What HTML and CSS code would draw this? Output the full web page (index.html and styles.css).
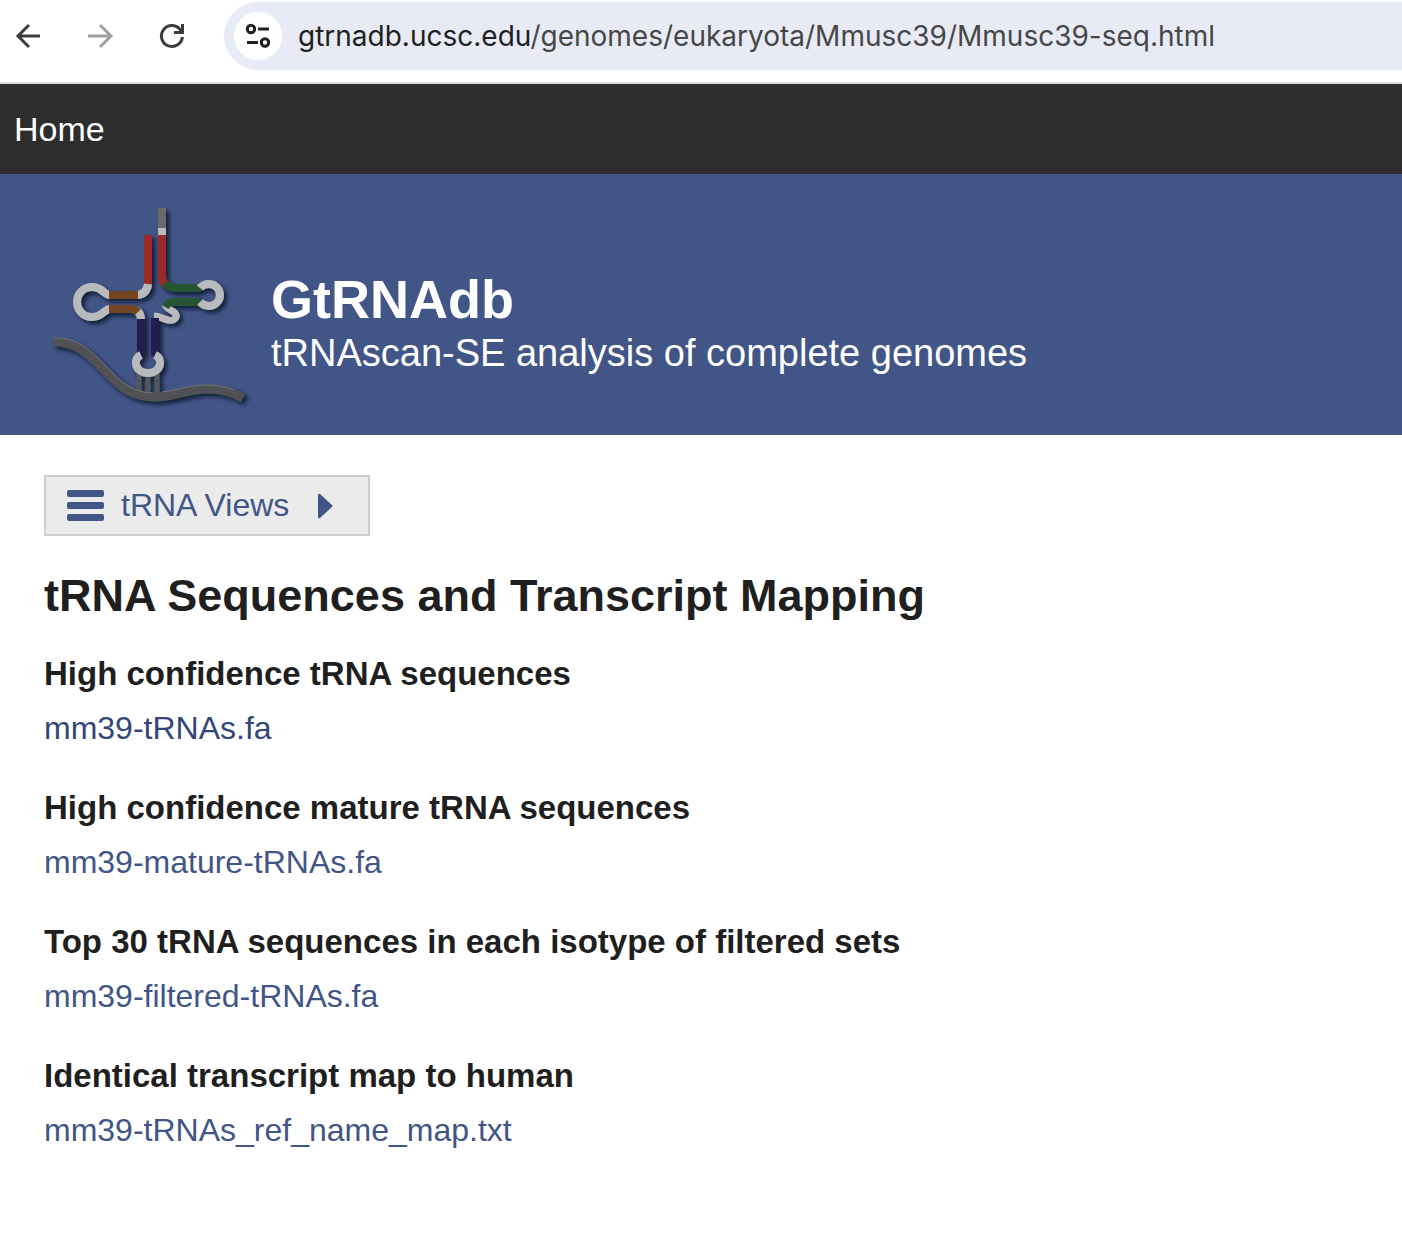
FILE: index.html
```html
<!DOCTYPE html>
<html lang="en">
<head>
<meta charset="utf-8">
<title>GtRNAdb - tRNA Sequences and Transcript Mapping</title>
<meta name="viewport" content="width=device-width, initial-scale=1">
<link rel="stylesheet" href="styles.css">
</head>
<body>
<div class="toolbar">
  <button class="tool" type="button" aria-label="Back">
    <svg width="32" height="32" viewBox="0 0 32 32" fill="none" stroke="#3c3c3c" stroke-width="3"><path d="M28 16H7M17 5L6 16L17 27"/></svg>
  </button>
  <button class="tool" type="button" aria-label="Forward" disabled>
    <svg width="32" height="32" viewBox="0 0 32 32" fill="none" stroke="#a0a0a0" stroke-width="3"><path d="M4 16H26M16 5L27 16L16 27"/></svg>
  </button>
  <button class="tool" type="button" aria-label="Reload">
    <svg width="32" height="32" viewBox="0 0 32 32" fill="none" stroke="#3c3c3c" stroke-width="3"><path d="M26.400 17A10.500 10.500 0 1 1 23.500 8.700L26 12M26.500 4V12.500H18"/></svg>
  </button>
  <div class="address">
    <button class="site-info" type="button" aria-label="View site information">
      <svg width="32" height="32" viewBox="0 0 32 32" fill="none" stroke="#1f1f1f" stroke-width="3"><circle cx="9" cy="9" r="3.700"/><path d="M16 9H27M5 22.500H16"/><circle cx="23" cy="22.500" r="3.700"/></svg>
    </button>
    <span class="url">gtrnadb.ucsc.edu<span class="path">/genomes/eukaryota/Mmusc39/Mmusc39-seq.html</span></span>
  </div>
</div>
<nav class="nav"><a href="#">Home</a></nav>
<header class="banner">
  <svg class="logo" viewBox="0 0 220 230" fill="none" stroke-width="8" aria-hidden="true">
    <defs>
      <filter id="shade" x="-10%" y="-10%" width="120%" height="120%"><feDropShadow dx="3" dy="3" stdDeviation="2" flood-color="#000820" flood-opacity=".8"/></filter>
    </defs>
    <g filter="url(#shade)">
      <g stroke="#55565a" stroke-width="5"><path d="M99 182V204M108 182V206M117 182V206"/></g>
      <path stroke="#505154" stroke-width="9" d="M13 152C39 151 52 168 65 181C78 194 89 206 114 207C136 207 145 199 168 199C182 199 194 203 203 208"/>
      <path stroke="#696b6c" d="M122 18V38"/>
      <path stroke="#b8babd" d="M122 38V45"/>
      <path stroke="#9a2925" d="M122 45V86Q122 92 127 96M108 45V94"/>
      <path stroke="#b8babd" d="M108 94Q107 104 97 105M70 105C64 105 63 97 52 97C43 97 37 104 37 112C37 120 43 127 52 127C63 127 64 119 70 119M96 120Q101 123 101 130"/>
      <path stroke="#754522" d="M69 105H98M69 119H91Q95 119 98 122"/>
      <path stroke="#b8babd" stroke-width="7" d="M125 114C126 119 132 120 135 123C138 127 134 132 128 130C123 129 120 126 114 126"/>
      <path stroke="#265430" d="M125 93Q129 98 135 98H161M125 117Q128 112 134 112H161"/>
      <path stroke="#b8babd" d="M160 98C163 94 167 94 169 94C175 94 180 99 180 105C180 111 175 116 169 116C166 116 163 115 160 112"/>
      <path stroke="#201b50" d="M101 129V166M115 128V166"/>
      <path stroke="#b8babd" d="M101 165C92 169 95 183 108 183C121 183 124 169 115 165"/>
    </g>
    <path stroke="#747679" stroke-width="1" d="M14 148C40 147 54 164 67 177C80 191 91 202 112 203M122 202C140 200 148 195 168 195C178 195 186 197 194 200"/>
  </svg>
  <div class="brand">
    <div class="name">GtRNAdb</div>
    <div class="tagline">tRNAscan-SE analysis of complete genomes</div>
  </div>
</header>
<main class="content">
  <button class="views" type="button">
    <svg width="38" height="32" viewBox="0 0 38 32" fill="#425587" aria-hidden="true"><rect x="0" y="0" width="37" height="7" rx="2"/><rect x="0" y="12" width="37" height="7" rx="2"/><rect x="0" y="24" width="37" height="7" rx="2"/></svg>
    <span>tRNA Views</span>
    <svg class="caret" width="16" height="26" viewBox="0 0 16 26" fill="#425587" aria-hidden="true"><path d="M1 2Q1 0 3 1L15 12Q16 13 15 14L3 25Q1 26 1 24Z"/></svg>
  </button>
  <h1>tRNA Sequences and Transcript Mapping</h1>
  <section><h2>High confidence tRNA sequences</h2><a class="active" href="#">mm39-tRNAs.fa</a></section>
  <section><h2>High confidence mature tRNA sequences</h2><a href="#">mm39-mature-tRNAs.fa</a></section>
  <section><h2>Top 30 tRNA sequences in each isotype of filtered sets</h2><a href="#">mm39-filtered-tRNAs.fa</a></section>
  <section><h2>Identical transcript map to human</h2><a href="#">mm39-tRNAs_ref_name_map.txt</a></section>
</main>
</body>
</html>
```
FILE: styles.css
```css
* { box-sizing: border-box; }
body {
  margin: 0;
  background: #fff;
  color: #1f1f1f;
  font-family: "Liberation Sans", Arial, sans-serif;
  font-size: 32px;
}
button {
  margin: 0;
  padding: 0;
  border: 0;
  background: none;
  font: inherit;
}
svg { display: block; flex: none; }
a { color: #425587; text-decoration: none; }
.toolbar {
  display: flex;
  align-items: flex-start;
  height: 84px;
  padding-top: 2px;
  border-bottom: 2px solid #dcdcdc;
}
.tool {
  display: flex;
  align-items: center;
  justify-content: center;
  flex: none;
  width: 72px;
  height: 68px;
  padding-right: 16px;
}
.address {
  display: flex;
  align-items: center;
  gap: 16px;
  flex: 1;
  min-width: 0;
  height: 68px;
  margin-left: 8px;
  padding-left: 10px;
  border-radius: 34px 0 0 34px;
  background: #e8ebf5;
}
.site-info {
  display: flex;
  align-items: center;
  justify-content: center;
  flex: none;
  width: 48px;
  height: 48px;
  border-radius: 50%;
  background: #fff;
}
.url {
  font-family: Inter, sans-serif;
  font-size: 28px;
  white-space: nowrap;
}
.path { color: #474747; }
.nav {
  padding: 22px 14px;
  background: #2d2d2d;
  font-size: 34px;
  line-height: 46px;
}
.nav a { color: #fff; }
.banner {
  display: flex;
  align-items: flex-start;
  gap: 11px;
  padding: 16px 40px 15px;
  background: #425587;
  color: #fff;
}
.logo { width: 220px; height: 230px; }
.brand { padding-top: 80px; }
.name { font-size: 54px; font-weight: bold; line-height: 58px; }
.tagline { font-size: 38px; line-height: 50px; }
.content { padding: 40px 44px; }
.views {
  display: flex;
  align-items: center;
  gap: 16px;
  height: 61px;
  padding: 0 35px 0 21px;
  border: 2px solid #cecece;
  background: #ebebeb;
  color: #425587;
}
.caret { margin-left: 12px; }
h1 { margin: 32px 0 23px; font-size: 45px; line-height: 56px; }
h2 { margin: 0; font-size: 33px; line-height: 54px; }
section { margin-bottom: 26px; line-height: 54px; }
section:last-child { margin-bottom: 0; }
.active { color: #33467a; }
```
